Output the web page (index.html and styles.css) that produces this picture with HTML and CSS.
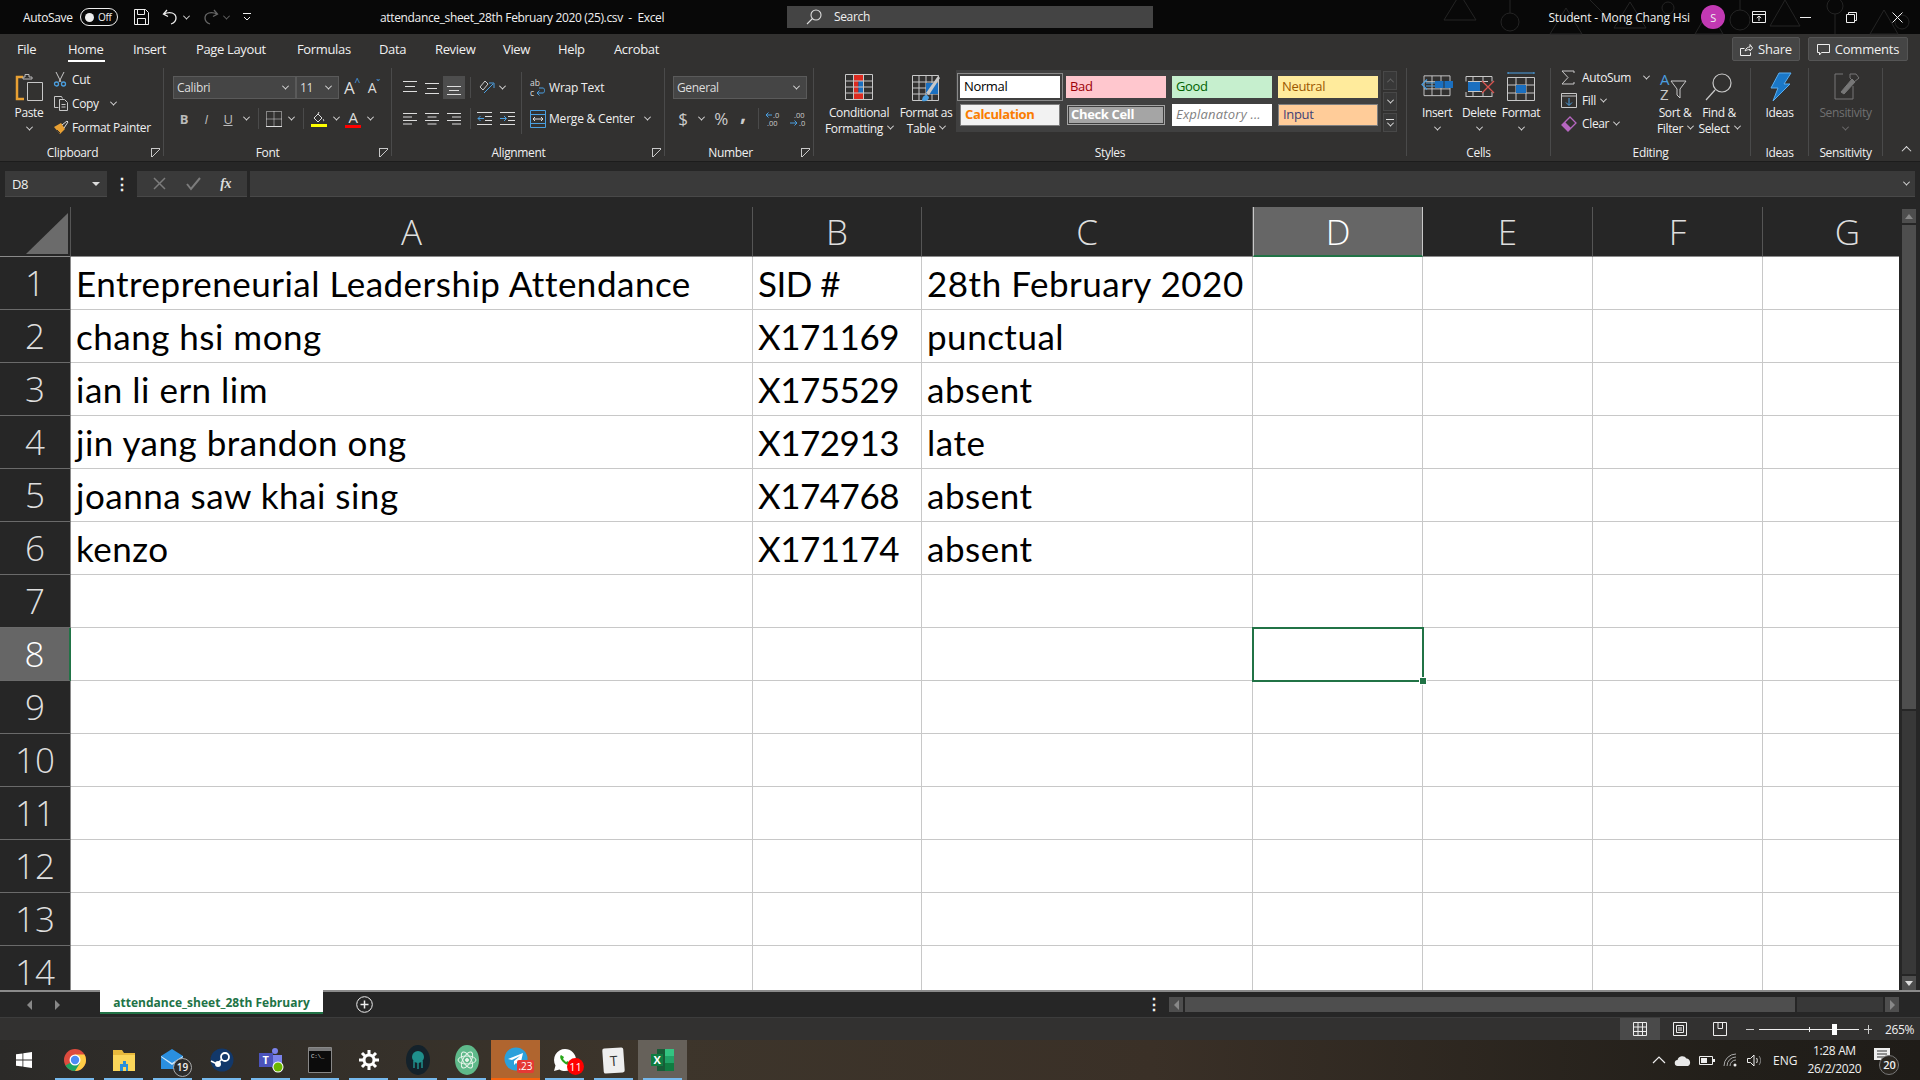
FILE: index.html
```html
<!DOCTYPE html>
<html lang="en">
<head>
  <meta charset="UTF-8" />
  <title>attendance_sheet_28th February 2020 (25).csv - Excel</title>
  <link rel="stylesheet" href="styles.css">
</head>
<body>

  <!-- title bar -->
  <div class="titlebar">
    <svg class="tb-pattern" width="480" height="34" fill="none" stroke="#242424">
      <path d="M20 -6l16 26h-32zM110 34l16-26 16 26zM190 2l16 26h-32zM255 34l14-24 14 24zM345 0l15 26h-30zM430 34l14-24 14 24z"/>
      <circle cx="70" cy="22" r="9"/><circle cx="228" cy="8" r="6"/><circle cx="300" cy="20" r="10"/><circle cx="395" cy="6" r="8"/><circle cx="462" cy="22" r="7"/>
      <path d="M70 0v13M150 0l20 20M300 0v10M395 14v20"/>
    </svg>
    <div class="tb-left">
      <span class="autosave">AutoSave</span>
      <span class="toggle"><i></i>Off</span>
      <svg class="qat" width="17" height="18" fill="none" stroke="#eee"><path d="M1.500 1.500h11l3 3v12h-14zM4.500 1.500v5h7v-5M4.500 16.500v-6h8v6"/></svg>
      <svg class="undo" width="18" height="16" fill="none" stroke="#eee" stroke-width="1.300"><path d="M5 1L1.500 5 6 7.500M2 5c6-3 12-1 12 4 0 3-2 5-5 6"/></svg>
      <i class="chev c-lite"></i>
      <svg class="redo" width="18" height="16" fill="none" stroke="#666" stroke-width="1.300"><path d="M13 1l3.500 4L12 7.500M16 5c-6-3-12-1-12 4 0 3 2 5 5 6"/></svg>
      <i class="chev c-dim"></i>
      <svg class="qat-more" width="8" height="10" fill="none" stroke="#eee"><path d="M0 1.500h8M1 5l3 3 3-3"/></svg>
    </div>
    <div class="tb-title">attendance_sheet_28th February 2020 (25).csv &nbsp;-&nbsp; Excel</div>
    <div class="search">
      <svg width="16" height="16" fill="none" stroke="#ddd" stroke-width="1.100"><circle cx="10" cy="6" r="5"/><path d="M6.500 9.500L1 15"/></svg>
      <span>Search</span>
    </div>
    <div class="tb-right">
      <span class="user">Student - Mong Chang Hsi</span>
      <span class="avatar">S</span>
      <span class="winbtn"><svg width="14" height="12" fill="none" stroke="#eee"><path d="M.5 .5h13v11H.5zM.5 3.500h13M7 10V5M4.800 7L7 5l2.200 2"/></svg></span>
      <span class="winbtn"><svg width="11" height="11" stroke="#eee"><path d="M0 5.500h11"/></svg></span>
      <span class="winbtn"><svg width="11" height="11" fill="none" stroke="#eee"><path d="M.5 2.500h8v8h-8zM2.500 2.500v-2h8v8h-2"/></svg></span>
      <span class="winbtn"><svg width="11" height="11" stroke="#eee"><path d="M.5 .5l10 10M10.500 .5l-10 10"/></svg></span>
    </div>
  </div>

  <!-- ribbon tabs -->
  <div class="tabs">
    <span class="tab">File</span>
    <span class="tab active">Home</span>
    <span class="tab">Insert</span>
    <span class="tab">Page Layout</span>
    <span class="tab">Formulas</span>
    <span class="tab">Data</span>
    <span class="tab">Review</span>
    <span class="tab">View</span>
    <span class="tab">Help</span>
    <span class="tab">Acrobat</span>
    <div class="tab-actions">
      <span class="pill pill-share"><svg width="13" height="13" fill="none" stroke="#eee"><path d="M4.500 5.500h-4v7h10v-3M5 8c1-3 3-4 5-4V1.500L12.500 5 10 8V6.500C8 6.500 6.500 7 5 8z"/></svg>Share</span>
      <span class="pill pill-comments"><svg width="13" height="13" fill="none" stroke="#eee"><path d="M.5 1.500h12v8h-8l-2 2.500v-2.500h-2z"/></svg>Comments</span>
    </div>
  </div>

  <!-- ribbon -->
  <div class="ribbon">
    <div class="group g-clip">
      <div class="body clip-body">
        <div class="big paste">
          <svg class="big-ic" width="30" height="30" fill="none"><path d="M9 5H3v22h7" stroke="#e8a033" stroke-width="2.500"/><path d="M9 5h2V2.500h4V5h3v2H9z" stroke="#bbb"/><path d="M13.500 10.500h15v18h-15z" stroke="#c8c8c8" fill="#333230"/></svg>
          <span>Paste</span><i class="chev"></i>
        </div>
        <div class="smalls">
          <div class="small"><svg width="14" height="16" fill="none"><path d="M3 1l5 10M11 1L6 11" stroke="#c8c8c8"/><circle cx="3.500" cy="13" r="2" stroke="#4a9fe0" stroke-width="1.300"/><circle cx="10.500" cy="13" r="2" stroke="#4a9fe0" stroke-width="1.300"/></svg><span>Cut</span></div>
          <div class="small"><svg width="16" height="16" fill="none" stroke="#c8c8c8"><path d="M5.500 12.500H1.500V1.500h7l1 2M6.500 4.500h5l3 3v8h-8zM8.500 9.500h4M8.500 12h4"/></svg><span>Copy</span><i class="chev cm"></i></div>
          <div class="small"><svg width="16" height="15" fill="none"><path d="M1 7l7-4 4 6-5 5z" fill="#e8a033"/><path d="M9 5l5-4 1 1-4 6" stroke="#ddd"/><path d="M4 10l3 3" stroke="#333"/></svg><span>Format Painter</span></div>
        </div>
      </div>
      <div class="glabel">Clipboard</div>
      <i class="launch"></i>
    </div>

    <div class="group g-font">
      <div class="body rows">
        <div class="row">
          <span class="select s-font">Calibri<i class="chev"></i></span>
          <span class="select s-size">11<i class="chev"></i></span>
          <span class="grow-a ga1">A<sup>^</sup></span>
          <span class="grow-a ga2">A<sup>ˇ</sup></span>
        </div>
        <div class="row">
          <span class="ic w22 glyph"><b>B</b></span>
          <span class="ic w22 glyph"><em>I</em></span>
          <span class="ic w22 glyph"><u>U</u></span>
          <span class="ic w14"><i class="chev"></i></span>
          <span class="sep"></span>
          <span class="ic w20"><svg width="16" height="16" fill="none" stroke="#ddd" stroke-dasharray="1 1"><path d="M.5 .5h15v15H.5zM8 .5v15M.5 8h15"/><path d="M0 15.500h16" stroke-dasharray="none"/></svg></span>
          <span class="ic w14"><i class="chev"></i></span>
          <span class="sep"></span>
          <span class="ic w20"><svg width="16" height="16" fill="none"><path d="M3 7l4-4 4 4-4 4zM8 1l-1 2M12 8c1 1 1 2 0 2" stroke="#ddd"/><path d="M0 13h16v3H0z" fill="#ff0"/></svg></span>
          <span class="ic w14"><i class="chev"></i></span>
          <span class="ic w20 fontcolor">A</span>
          <span class="ic w14"><i class="chev"></i></span>
        </div>
      </div>
      <div class="glabel">Font</div>
      <i class="launch"></i>
    </div>

    <div class="group g-align">
      <div class="body align-body">
        <div class="rows align-left">
          <div class="row">
            <span class="ic w22"><svg width="14" height="12" stroke="#ddd"><path d="M0 .5h14M2 5.500h10M0 10.500h14" transform="translate(0 -1)"/></svg></span>
            <span class="ic w22"><svg width="14" height="12" stroke="#ddd"><path d="M0 1.500h14M2 6.500h10M0 11.500h14"/></svg></span>
            <span class="ic w22 on"><svg width="14" height="14" stroke="#ddd"><path d="M0 5.500h14M2 9.500h10M0 13.500h14"/></svg></span>
            <span class="sep"></span>
            <span class="ic w20"><svg width="17" height="17" fill="none"><path d="M2 8l5-6 3 3-5 6z" stroke="#ccc"/><path d="M6 14L15 5M11 4h5v5" stroke="#4a9fe0"/></svg></span>
            <span class="ic w12"><i class="chev"></i></span>
          </div>
          <div class="row">
            <span class="ic w22"><svg width="14" height="12" stroke="#ddd"><path d="M0 .5h14M0 4h9M0 7.500h14M0 11h9"/></svg></span>
            <span class="ic w22"><svg width="14" height="12" stroke="#ddd"><path d="M0 .5h14M2.500 4h9M0 7.500h14M2.500 11h9"/></svg></span>
            <span class="ic w22"><svg width="14" height="12" stroke="#ddd"><path d="M0 .5h14M5 4h9M0 7.500h14M5 11h9"/></svg></span>
            <span class="sep"></span>
            <span class="ic w22 indent-a"><svg width="15" height="13" fill="none"><path d="M0 .5h15M8 4.500h7M8 8.500h7M0 12.500h15" stroke="#ddd"/><path d="M7 6.500H1M3.500 4l-2.500 2.500L3.500 9" stroke="#4a9fe0"/></svg></span>
            <span class="ic w22 indent-b"><svg width="15" height="13" fill="none"><path d="M0 .5h15M8 4.500h7M8 8.500h7M0 12.500h15" stroke="#ddd"/><path d="M0 6.500h6M4 4l2.500 2.500L4 9" stroke="#4a9fe0"/></svg></span>
          </div>
        </div>
        <div class="rows align-right">
          <div class="row"><svg class="wrap-ic" width="16" height="20" fill="none"><text x="0" y="8" class="wrap-text">ab</text><text x="0" y="18" class="wrap-text">c</text><path d="M7 15h6c2 0 2-5 0-5H9M9.500 12.500L7 15l2.500 2.500" stroke="#4a9fe0"/></svg><span class="t">Wrap Text</span></div>
          <div class="row"><svg class="wrap-ic" width="16" height="18" fill="none"><path d="M.5 .5h15v17H.5zM.5 4.500h15M.5 13.500h15" stroke="#4a9fe0"/><path d="M3 9h10M5 7L3 9l2 2M11 7l2 2-2 2" stroke="#ddd"/></svg><span class="t">Merge &amp; Center</span><i class="chev merge-chev"></i></div>
        </div>
      </div>
      <div class="glabel">Alignment</div>
      <i class="launch"></i>
    </div>

    <div class="group g-number">
      <div class="body rows">
        <div class="row"><span class="select s-gen">General<i class="chev"></i></span></div>
        <div class="row">
          <span class="ic w20 numglyph">$</span>
          <span class="ic w16"><i class="chev"></i></span>
          <span class="ic w20 ml2 numglyph">%</span>
          <span class="ic w20 ml2 numglyph comma">,</span>
          <span class="sep"></span>
          <span class="ic w20 decs"><svg width="18" height="16" fill="none"><text x="8" y="7" class="dec-text">.0</text><text x="2" y="15" class="dec-text">.00</text><path d="M7 4H1M3.500 1.500L1 4l2.500 2.500" stroke="#4a9fe0"/></svg></span>
          <span class="ic w20 decs ml4"><svg width="18" height="16" fill="none"><text x="5" y="7" class="dec-text">.00</text><text x="10" y="15" class="dec-text">.0</text><path d="M1 12h7M5.500 9.500L8 12l-2.500 2.500" stroke="#4a9fe0"/></svg></span>
        </div>
      </div>
      <div class="glabel">Number</div>
      <i class="launch"></i>
    </div>

    <div class="group g-styles">
      <div class="body styles-body">
        <div class="big cf">
          <svg class="big-ic" width="30" height="30" fill="none"><path d="M9.500 2h10v7h-10zM9.500 21h10v7h-10z" fill="#dc2a20"/><path d="M9.500 9h5v12h-5z" fill="#dc2a20"/><path d="M14.500 9h5v12h-5z" fill="#1a6fc0"/><path d="M1.500 2.500h27v25h-27zM1.500 9h27M1.500 15h27M1.500 21h27M9.500 2.500v25M19.500 2.500v25" stroke="#c8c8c8"/></svg>
          <span>Conditional</span><span>Formatting<i class="chev inl"></i></span>
        </div>
        <div class="big fat">
          <svg class="big-ic" width="30" height="30" fill="none"><path d="M1.500 3.500h26v25h-26zM1.500 10h26M1.500 16h26M1.500 22h26M8 3.500v25M15 3.500v25M21 3.500v25" stroke="#c8c8c8"/><path d="M15 11h12v11H15z" fill="#1a6fc0"/><path d="M27 4l2 2-11 17-3-2z" fill="#c8c8c8"/><path d="M11 29c0-4 2-6 5-6l2 2c0 3-3 5-7 4z" fill="#4a9fe0"/></svg>
          <span>Format as</span><span>Table<i class="chev inl"></i></span>
        </div>
        <div class="gallery">
          <span class="sty st-normal">Normal</span>
          <span class="sty st-bad">Bad</span>
          <span class="sty st-good">Good</span>
          <span class="sty st-neutral">Neutral</span>
          <span class="sty st-calc">Calculation</span>
          <span class="sty st-check">Check Cell</span>
          <span class="sty st-expl">Explanatory ...</span>
          <span class="sty st-input">Input</span>
        </div>
        <div class="spin">
          <span class="spin-btn dis"><i class="chev up"></i></span>
          <span class="spin-btn"><i class="chev"></i></span>
          <span class="spin-btn more"><i class="bar"></i><i class="chev"></i></span>
        </div>
      </div>
      <div class="glabel">Styles</div>
    </div>

    <div class="group g-cells">
      <div class="body cells-body">
        <div class="big c42">
          <svg class="big-ic" width="32" height="30" fill="none"><path d="M3 6.500h26v22H3zM3 13h26M3 21h26M11 6.500v22M20 6.500v22" stroke="#c8c8c8" transform="translate(0 -2) scale(1 .9)"/><path d="M14 9h18v7H14z" fill="#1a6fc0"/><path d="M23 9v7" stroke="#333230"/><path d="M14 11H5M14 14H5M6 7.500L1 12.500l5 5" stroke="#4a9fe0" stroke-width="1.200"/></svg>
          <span>Insert</span><i class="chev"></i>
        </div>
        <div class="big c42">
          <svg class="big-ic" width="32" height="30" fill="none"><path d="M3 4.500h26M3 24.500h26M3 4.500v5M29 4.500v5M3 20v5M29 20v5M10 4.500v5M10 20v5M20 4.500v5M20 20v5" stroke="#c8c8c8"/><path d="M5 10h12v9H5z" fill="#1a6fc0"/><path d="M5 9.500h20M5 19.500h14" stroke="#c8c8c8"/><path d="M19 9l12 12M31 9L19 21" stroke="#d9534f" stroke-width="1.300"/></svg>
          <span>Delete</span><i class="chev"></i>
        </div>
        <div class="big c42">
          <svg class="big-ic" width="30" height="30" fill="none"><path d="M2 1h26M2 0v2M28 0v2" stroke="#4a9fe0"/><path d="M1.500 5.500h27v23h-27zM1.500 13h27M1.500 21h27M10 5.500v23M20 5.500v23" stroke="#c8c8c8"/><path d="M10 13h10v8H10z" fill="#1a6fc0"/></svg>
          <span>Format</span><i class="chev"></i>
        </div>
      </div>
      <div class="glabel">Cells</div>
    </div>

    <div class="group g-edit">
      <div class="body edit-body">
        <div class="edit-small">
          <div class="small es"><svg width="14" height="15" fill="none" stroke="#c8c8c8"><path d="M13 3V1H1l6 6.500L1 14h12v-2"/></svg><span>AutoSum</span><i class="chev autosum-chev"></i></div>
          <div class="small es"><svg width="16" height="15" fill="none"><path d="M.5 .5h15v14H.5zM.5 3h15" stroke="#c8c8c8"/><path d="M8 5v7M5 9.500L8 12.500l3-3" stroke="#4a9fe0"/></svg><span>Fill</span><i class="chev ce"></i></div>
          <div class="small es"><svg width="16" height="16"><path d="M1 9l8-8 6 6-8 8z" fill="none" stroke="#b666c0" stroke-width="1.300"/><path d="M1 9l3-3 6 6-3 3z" fill="#b666c0"/></svg><span>Clear</span><i class="chev ce"></i></div>
        </div>
        <div class="big c44">
          <svg class="big-ic" width="30" height="30" fill="none"><text x="0" y="13" class="az a">A</text><text x="0" y="28" class="az">Z</text><path d="M11 9h15l-6 8v9l-3-3v-6z" stroke="#c8c8c8"/></svg>
          <span>Sort &amp;</span><span>Filter<i class="chev inl"></i></span>
        </div>
        <div class="big c44">
          <svg class="big-ic" width="30" height="30" fill="none" stroke="#c8c8c8" stroke-width="1.200"><circle cx="18" cy="11" r="9"/><path d="M11 18L2 28"/></svg>
          <span>Find &amp;</span><span>Select<i class="chev inl"></i></span>
        </div>
      </div>
      <div class="glabel">Editing</div>
    </div>

    <div class="group g-ideas">
      <div class="body">
        <div class="big">
          <svg class="big-ic" width="24" height="30"><path d="M11 1h12l-7 11h6L5 29l5-13H3z" fill="#1a78c8" stroke="#5aaef0"/></svg>
          <span>Ideas</span>
        </div>
      </div>
      <div class="glabel">Ideas</div>
    </div>

    <div class="group g-sens">
      <div class="body">
        <div class="big disabled">
          <svg class="big-ic" width="28" height="30" fill="none" stroke="#777"><path d="M11 2H3v25h18V14"/><path d="M9 20l11-13 3 3-11 12z" fill="#777"/><path d="M18 2h6l3 4-5 4-4-4z"/></svg>
          <span>Sensitivity</span><i class="chev"></i>
        </div>
      </div>
      <div class="glabel">Sensitivity</div>
    </div>
    <i class="chev up collapse"></i>
  </div>

  <!-- formula bar -->
  <div class="fbar">
    <span class="namebox">D8<i class="tri"></i></span>
    <span class="fdots">⋮</span>
    <span class="fbtns">
      <svg width="13" height="13" stroke="#7c7c7c" stroke-width="1.500"><path d="M1 1l11 11M12 1L1 12"/></svg>
      <svg width="15" height="13" fill="none" stroke="#7c7c7c" stroke-width="2"><path d="M1 7l4 5 9-11"/></svg>
      <em>fx</em>
    </span>
    <span class="finput"><i class="chev"></i></span>
  </div>

  <!-- worksheet -->
  <div class="sheet-wrap">
    <div class="sheet">
      <div class="hd corner"><svg width="42" height="41"><path d="M42 0v41H0z" fill="#6b6b6b"/></svg></div>
      <div class="hd">A</div><div class="hd">B</div><div class="hd">C</div><div class="hd hd-sel">D</div><div class="hd">E</div><div class="hd">F</div><div class="hd">G</div>

      <div class="rh">1</div><div class="c">Entrepreneurial Leadership Attendance</div><div class="c n">SID #</div><div class="c">28th February 2020</div><div class="c"></div><div class="c"></div><div class="c"></div><div class="c"></div>
      <div class="rh">2</div><div class="c">chang hsi mong</div><div class="c n">X171169</div><div class="c">punctual</div><div class="c"></div><div class="c"></div><div class="c"></div><div class="c"></div>
      <div class="rh">3</div><div class="c">ian li ern lim</div><div class="c n">X175529</div><div class="c">absent</div><div class="c"></div><div class="c"></div><div class="c"></div><div class="c"></div>
      <div class="rh">4</div><div class="c">jin yang brandon ong</div><div class="c n">X172913</div><div class="c">late</div><div class="c"></div><div class="c"></div><div class="c"></div><div class="c"></div>
      <div class="rh">5</div><div class="c">joanna saw khai sing</div><div class="c n">X174768</div><div class="c">absent</div><div class="c"></div><div class="c"></div><div class="c"></div><div class="c"></div>
      <div class="rh">6</div><div class="c">kenzo</div><div class="c n">X171174</div><div class="c">absent</div><div class="c"></div><div class="c"></div><div class="c"></div><div class="c"></div>
      <div class="rh">7</div><div class="c"></div><div class="c"></div><div class="c"></div><div class="c"></div><div class="c"></div><div class="c"></div><div class="c"></div>
      <div class="rh rh-sel">8</div><div class="c"></div><div class="c"></div><div class="c"></div><div class="c selected"><i class="handle"></i></div><div class="c"></div><div class="c"></div><div class="c"></div>
      <div class="rh">9</div><div class="c"></div><div class="c"></div><div class="c"></div><div class="c"></div><div class="c"></div><div class="c"></div><div class="c"></div>
      <div class="rh">10</div><div class="c"></div><div class="c"></div><div class="c"></div><div class="c"></div><div class="c"></div><div class="c"></div><div class="c"></div>
      <div class="rh">11</div><div class="c"></div><div class="c"></div><div class="c"></div><div class="c"></div><div class="c"></div><div class="c"></div><div class="c"></div>
      <div class="rh">12</div><div class="c"></div><div class="c"></div><div class="c"></div><div class="c"></div><div class="c"></div><div class="c"></div><div class="c"></div>
      <div class="rh">13</div><div class="c"></div><div class="c"></div><div class="c"></div><div class="c"></div><div class="c"></div><div class="c"></div><div class="c"></div>
      <div class="rh">14</div><div class="c"></div><div class="c"></div><div class="c"></div><div class="c"></div><div class="c"></div><div class="c"></div><div class="c"></div>
    </div>
    <div class="vscroll">
      <span class="sb-btn"><i class="tri up"></i></span>
      <span class="v-thumb"></span>
      <span class="v-track"></span>
      <span class="sb-btn"><i class="tri"></i></span>
    </div>
  </div>

  <!-- sheet tabs + horizontal scrollbar -->
  <div class="sheetbar">
    <span class="nav"><i class="tri left"></i><i class="tri right"></i></span>
    <span class="sheet-tab">attendance_sheet_28th February</span>
    <svg class="add" width="17" height="17" fill="none" stroke="#eee"><circle cx="8.500" cy="8.500" r="7.800"/><path d="M8.500 4.500v8M4.500 8.500h8" stroke-width="1.500"/></svg>
    <span class="sdots">⋮</span>
    <div class="hscroll">
      <span class="sb-btn"><i class="tri left"></i></span>
      <span class="h-thumb"></span>
      <span class="h-track"></span>
      <span class="sb-btn"><i class="tri right"></i></span>
    </div>
  </div>

  <!-- status bar -->
  <div class="statusbar">
    <span class="view on"><svg width="14" height="14" fill="none" stroke="#eee"><path d="M.5 .5h13v13H.5zM.5 5h13M.5 9.500h13M5 .5v13M9.500 .5v13"/></svg></span>
    <span class="view"><svg width="14" height="14" fill="none" stroke="#eee"><path d="M.5 .5h13v13H.5zM3.500 3.500h7v7h-7zM5 6h4M5 8h4"/></svg></span>
    <span class="view"><svg width="14" height="14" fill="none" stroke="#eee"><path d="M.5 .5h13v13H.5zM5 .5v6h4.500v-6"/></svg></span>
    <span class="zoom-minus"></span>
    <span class="slider"><i class="tick"></i><i class="thumb"></i></span>
    <span class="zoom-plus"></span>
    <span class="pct">265%</span>
  </div>

  <!-- taskbar -->
  <div class="taskbar">
    <span class="task start"><svg width="16" height="16" fill="#fff"><path d="M0 2.300L6.500 1.400v6.200H0zM7.300 1.300L16 0v7.600H7.300zM0 8.400h6.500v6.200L0 13.700zM7.300 8.400H16V16l-8.700-1.300z"/></svg></span>
    <span class="task run"><svg width="24" height="24"><circle cx="12" cy="12" r="11" fill="#dd4b3e"/><path d="M12 12V23A11 11 0 0 0 23 12 11 11 0 0 0 21.500 6.500H12z" fill="#ffcd46"/><path d="M12 12L2.500 17.500A11 11 0 0 0 12 23l5-8z" fill="#1da462"/><circle cx="12" cy="12" r="5.500" fill="#fff"/><circle cx="12" cy="12" r="4.200" fill="#4c8bf5"/></svg></span>
    <span class="task run2"><svg width="24" height="22"><path d="M1 1h9l2 3h11v18H1z" fill="#e8b93c"/><path d="M1 6h22v16H1z" fill="#fbd65a"/><path d="M8 22v-7h3v-3h3v3h2v7h-2v-4h-3v4z" fill="#2a8fd8"/></svg></span>
    <span class="task run2"><svg width="24" height="22"><path d="M0 7l11-7 11 7v13H0z" fill="#2a8fe0"/><path d="M0 7l11 7 11-7v1L11 16 0 8z" fill="#cfe8fb"/></svg><b class="count">19</b></span>
    <span class="task run"><svg width="24" height="24"><circle cx="12" cy="12" r="11.500" fill="#12386a"/><circle cx="15" cy="9" r="4" fill="none" stroke="#fff" stroke-width="1.800"/><circle cx="8" cy="16" r="3" fill="#fff"/><path d="M1 13l6 3 5-5" stroke="#fff" stroke-width="1.500" fill="none"/></svg></span>
    <span class="task run"><svg width="26" height="26"><circle cx="17" cy="4" r="3" fill="#7b83eb"/><path d="M13 8h11v9a5 5 0 0 1-11 0z" fill="#7b83eb"/><path d="M1 6h14v14H1z" fill="#4b53bc"/><text x="4.500" y="17" class="teams-t">T</text><circle cx="20" cy="20" r="5.500" fill="#fff"/><circle cx="20" cy="20" r="4.500" fill="#6bb700"/></svg></span>
    <span class="task run2"><svg width="24" height="26"><path d="M.5 .5h23v25H.5z" fill="#0c0c0c" stroke="#888"/><path d="M1 1h22v3H1z" fill="#777"/><text x="3" y="11" class="cmd-t">C:\_</text></svg></span>
    <span class="task run"><svg width="20" height="20" fill="none" stroke="#fff"><circle cx="10" cy="10" r="5" stroke-width="3"/><path d="M10 0v4M10 16v4M0 10h4M16 10h4M3 3l3 3M14 14l3 3M17 3l-3 3M6 14l-3 3" stroke-width="3"/></svg></span>
    <span class="task run"><svg width="24" height="30"><ellipse cx="12" cy="15" rx="12" ry="15" fill="#14222b"/><circle cx="12" cy="12" r="6" fill="#1f8f8c"/><path d="M8 16v7M12 17v7M16 16v7" stroke="#1f8f8c" stroke-width="1.500"/></svg></span>
    <span class="task run"><svg width="24" height="30" fill="none" stroke="#e8f5ea"><ellipse cx="12" cy="15" rx="12" ry="15" fill="#5fb98a" stroke="none"/><ellipse cx="12" cy="15" rx="9" ry="4"/><ellipse cx="12" cy="15" rx="9" ry="4" transform="rotate(60 12 15)"/><ellipse cx="12" cy="15" rx="9" ry="4" transform="rotate(120 12 15)"/><circle cx="12" cy="15" r="1.500" fill="#e8f5ea"/></svg></span>
    <span class="task flash"><svg width="24" height="24"><circle cx="12" cy="12" r="11.500" fill="#2ba0db"/><path d="M4 12l15-6-3 13-4-3-2 2v-4l6-5-8 4z" fill="#fff"/></svg><b class="badge red-sq">.23</b></span>
    <span class="task run"><svg width="24" height="24"><path d="M12 1a11 11 0 0 1 0 22c-2 0-4-.5-5.500-1.500L1 23l1.500-5.500A11 11 0 0 1 12 1z" fill="#fff"/><path d="M8 7c-2 2 0 5 2 7s5 4 7 2l-2-3-2 1-3-3 1-2z" fill="#29a71a"/></svg><b class="badge red-c">11</b></span>
    <span class="task run"><span class="tlogo">T</span></span>
    <span class="task run current"><svg width="24" height="24"><path d="M6 1h17v22H6z" fill="#185c37"/><path d="M14 1h9v7h-9z" fill="#33c481"/><path d="M14 8h9v7h-9z" fill="#21a366"/><path d="M14 15h9v8h-9z" fill="#107c41"/><path d="M0 6h12v12H0z" fill="#107c41"/><text x="2.500" y="16" class="xl-t">X</text></svg></span>
    <div class="tray">
      <svg width="14" height="8" fill="none" stroke="#eee" stroke-width="1.200"><path d="M1 7l6-6 6 6"/></svg>
      <svg width="17" height="11" fill="#e8e8e8"><path d="M4 11a3 3 0 0 1-.5-6 5 5 0 0 1 9-1.500A4 4 0 0 1 14 11z"/></svg>
      <svg width="16" height="9" fill="none" stroke="#eee"><path d="M.5 .5h13v8H.5z"/><path d="M2 2h6v5H2z" fill="#eee" stroke="none"/><path d="M15 3v3" stroke-width="2"/></svg>
      <svg width="16" height="14" fill="none" stroke="#aaa"><path d="M1 13a12 12 0 0 1 12-12M4 13a9 9 0 0 1 9-9M7 13a6 6 0 0 1 6-6"/><circle cx="12" cy="12" r="1.500" fill="#eee" stroke="none"/></svg>
      <svg width="16" height="13" fill="none" stroke="#eee"><path d="M.5 4.500h3l3.500-3.500v11l-3.500-3.500h-3zM9.500 4c1 1 1 4 0 5"/><path d="M12 2c2 2 2 7 0 9" stroke="#888"/></svg>
      <span class="lang">ENG</span>
      <span class="clock"><span>1:28 AM</span><span>26/2/2020</span></span>
      <span class="notif"><svg width="16" height="13" fill="#eee"><path d="M0 0h16v12H0z"/><path d="M3 3h10M3 6h10M3 9h7" stroke="#333" fill="none"/></svg><b>20</b></span>
    </div>
  </div>

</body>
</html>
```

FILE: styles.css
```css
* {
  box-sizing: border-box;
}
body {
  margin: 0;
  width: 1920px;
  height: 1080px;
  overflow: hidden;
  display: flex;
  flex-direction: column;
  font-family: "Open Sans", "Noto Sans", sans-serif;
  font-size: 12px;
  letter-spacing: -0.35px;
  color: #f0f0f0;
  background: #323130;
}
svg {
  flex: none;
  display: block;
  overflow: visible;
}
i {
  font-style: normal;
}

/* small chevrons */
.chev {
  display: inline-block;
  width: 5px;
  height: 5px;
  border-right: 1px solid #e0e0e0;
  border-bottom: 1px solid #e0e0e0;
  transform: rotate(45deg) translate(-1px, -1px);
  flex: none;
}
.chev.up {
  transform: rotate(225deg) translate(-1px, -1px);
}
.chev.inl {
  margin-left: 5px;
  vertical-align: 3px;
}
.chev.cm {
  margin-left: 9px;
}
.chev.ce {
  margin-left: 0;
}
.c-lite {
  margin-left: -8px;
}
.c-dim {
  margin-left: -7px;
  border-color: #666;
}
.tri {
  display: inline-block;
  width: 0;
  height: 0;
  border-left: 4px solid transparent;
  border-right: 4px solid transparent;
  border-top: 5px solid #ddd;
}
.tri.up {
  border-top: 0;
  border-bottom: 5px solid #888;
}
.tri.left {
  border: 0;
  border-top: 5px solid transparent;
  border-bottom: 5px solid transparent;
  border-right: 5px solid #888;
}
.tri.right {
  border: 0;
  border-top: 5px solid transparent;
  border-bottom: 5px solid transparent;
  border-left: 5px solid #888;
}

/* title bar */
.titlebar {
  height: 34px;
  flex: none;
  display: flex;
  align-items: center;
  background: #080808;
  position: relative;
}
.tb-pattern {
  position: absolute;
  top: 0;
  left: 1440px;
}
.tb-left {
  width: 380px;
  padding-left: 23px;
  display: flex;
  align-items: center;
  gap: 12px;
  flex: none;
}
.autosave {
  width: 51px;
}
.toggle {
  width: 38px;
  height: 18px;
  border: 1px solid #eee;
  border-radius: 9px;
  display: flex;
  align-items: center;
  gap: 4px;
  padding-left: 4px;
  font-size: 10px;
  margin-left: -6px;
}
.toggle i {
  width: 9px;
  height: 9px;
  background: #eee;
  border-radius: 50%;
}
.qat {
  margin-left: 3px;
}
.qat-more {
  margin-left: 2px;
}
.tb-title {
  width: 407px;
  flex: none;
  white-space: nowrap;
}
.search {
  width: 366px;
  height: 22px;
  background: #444;
  display: flex;
  align-items: center;
  gap: 12px;
  padding-left: 19px;
  flex: none;
  line-height: 20px;
}
.tb-right {
  flex: 1;
  display: flex;
  align-items: center;
  justify-content: flex-end;
  position: relative;
}
.user {
  margin-right: 11px;
  letter-spacing: -0.15px;
}
.avatar {
  width: 24px;
  height: 24px;
  border-radius: 50%;
  background: #c239b3;
  display: flex;
  align-items: center;
  justify-content: center;
  margin-right: 11px;
  font-size: 11px;
}
.winbtn {
  width: 46px;
  height: 34px;
  display: flex;
  align-items: center;
  justify-content: center;
}

/* ribbon tabs */
.tabs {
  height: 32px;
  flex: none;
  display: grid;
  grid-template-columns: 51px 65px 63px 101px 82px 56px 68px 55px 56px 1fr 188px;
  align-items: start;
  padding-left: 17px;
  background: #323130;
  font-size: 13px;
}
.tab {
  height: 28px;
  line-height: 30px;
  position: relative;
  white-space: nowrap;
}
.tab.active::after {
  content: "";
  position: absolute;
  left: 0;
  width: 37px;
  bottom: 0;
  height: 2px;
  background: #fff;
}
.tab-actions {
  grid-column: 11;
  display: flex;
  gap: 8px;
  padding-top: 3px;
}
.pill {
  height: 24px;
  border: 1px solid #555;
  border-radius: 2px;
  background: #454545;
  display: flex;
  align-items: center;
  justify-content: center;
  gap: 5px;
  font-size: 13px;
  letter-spacing: -0.2px;
}
.pill-share {
  width: 68px;
}
.pill-comments {
  width: 100px;
}

/* ribbon */
.ribbon {
  height: 95px;
  flex: none;
  display: flex;
  padding-top: 2px;
  background: #323130;
  position: relative;
  box-shadow: 0 1px 0 #1c1c1c;
}
.group {
  height: 88px;
  flex: none;
  border-right: 1px solid #4a4a4a;
  position: relative;
}
.g-clip { width: 164px; }
.g-font { width: 228px; }
.g-align { width: 273px; }
.g-number { width: 149px; }
.g-styles { width: 593px; }
.g-cells { width: 144px; }
.g-edit { width: 200px; }
.g-ideas { width: 58px; }
.g-sens { width: 74px; }
.body {
  height: 76px;
}
.g-font .body { padding-left: 9px; }
.g-align .body { padding-left: 7px; }
.g-number .body { padding-left: 8px; }
.g-styles .body { padding-left: 11px; }
.g-cells .body { padding-left: 9px; }
.g-edit .body { padding-left: 10px; }
.glabel {
  height: 12px;
  line-height: 17px;
  text-align: center;
  white-space: nowrap;
}
.g-clip .glabel { padding-right: 18px; }
.g-font .glabel { padding-right: 20px; }
.g-align .glabel { padding-right: 19px; }
.g-number .glabel { padding-right: 17px; }
.launch {
  position: absolute;
  right: 3px;
  bottom: -1px;
  width: 9px;
  height: 9px;
  border-left: 1px solid #c8c8c8;
  border-top: 1px solid #c8c8c8;
  background: linear-gradient(135deg, transparent 45%, #c8c8c8 45%, #c8c8c8 55%, transparent 55%);
}
.collapse {
  position: absolute;
  right: 10px;
  bottom: 8px;
  width: 7px;
  height: 7px;
}
.big {
  display: flex;
  flex-direction: column;
  align-items: center;
  padding-top: 4px;
  line-height: 16px;
  white-space: nowrap;
}
.big-ic {
  height: 30px;
  margin-bottom: 3px;
}
.big > .chev {
  margin-top: 5px;
}
.disabled {
  color: #707070;
}
.disabled .chev {
  border-color: #707070;
}

.clip-body {
  display: flex;
  padding-left: 10px;
}
.paste {
  width: 38px;
}
.smalls {
  margin: -1px 0 0 5px;
}
.small {
  height: 24px;
  display: flex;
  align-items: center;
  gap: 3px;
  white-space: nowrap;
}
.small svg {
  width: 16px;
}
.rows {
  padding-top: 8px;
}
.row {
  height: 23px;
  display: flex;
  align-items: center;
  margin-bottom: 8px;
}
.select {
  height: 23px;
  border: 1px solid #5a5a5a;
  background: #454545;
  display: flex;
  align-items: center;
  justify-content: space-between;
  padding: 0 7px 0 3px;
  color: #ddd;
}
.s-font { width: 123px; }
.s-size { width: 43px; }
.s-gen { width: 134px; }
.grow-a {
  font-size: 17px;
  color: #ddd;
  display: inline-flex;
  align-items: flex-start;
}
.grow-a sup {
  font-size: 10px;
  line-height: 12px;
  color: #4a9fe0;
}
.ga1 { margin-left: 5px; }
.ga2 { margin-left: 8px; font-size: 14px; }
.ic {
  height: 23px;
  display: inline-flex;
  align-items: center;
  justify-content: center;
  flex: none;
}
.w12 { width: 12px; }
.w14 { width: 14px; }
.w16 { width: 16px; }
.w20 { width: 20px; }
.w22 { width: 22px; }
.ml2 { margin-left: 2px; }
.ml4 { margin-left: 4px; }
.on {
  background: #4d4d4d;
}
.glyph {
  font-size: 13px;
  color: #bbb;
}
.sep {
  width: 1px;
  height: 21px;
  background: #4a4a4a;
  margin: 0 5px;
  flex: none;
}
.fontcolor {
  font-size: 15px;
  border-bottom: 3px solid #f00;
  height: 18px;
  line-height: 14px;
  color: #ddd;
  width: 16px;
  margin: 0 2px;
  align-items: flex-start;
}
.align-body {
  display: flex;
}
.align-left {
  width: 123px;
  border-right: 1px solid #4a4a4a;
  height: 62px;
  margin-top: 4px;
  padding-top: 4px;
}
.indent-a {
  margin-left: -3px;
}
.indent-b {
  margin-left: 1px;
}
.align-right {
  padding-left: 8px;
}
.wrap-ic {
  margin-right: 3px;
}
.wrap-text {
  font-size: 8.500px;
  fill: #ddd;
  letter-spacing: 0;
}
.t {
  letter-spacing: -0.2px;
}
.merge-chev {
  margin-left: 11px;
}
.numglyph {
  font-size: 17px;
  color: #ccc;
}
.comma {
  font-weight: 700;
  font-size: 22px;
  padding-bottom: 14px;
}
.dec-text {
  font-size: 7.500px;
  fill: #ccc;
  letter-spacing: 0;
}

.styles-body {
  display: flex;
}
.cf {
  width: 68px;
}
.fat {
  width: 52px;
  margin-left: 7px;
}
.gallery {
  width: 425px;
  height: 62px;
  margin: 2px 0 0 4px;
  padding: 6px 0 0 4px;
  background: #404040;
  display: grid;
  grid-template-columns: repeat(4, 100px);
  grid-auto-rows: 22px;
  gap: 6px;
  flex: none;
}
.sty {
  line-height: 20px;
  padding-left: 4px;
  font-size: 13px;
  white-space: nowrap;
  overflow: hidden;
}
.st-normal {
  background: #fff;
  color: #000;
  outline: 1px solid #8a8a8a;
  outline-offset: 2px;
}
.st-bad { background: #ffc7ce; color: #9c0006; }
.st-good { background: #c6efce; color: #006100; }
.st-neutral { background: #ffeb9c; color: #9c5700; }
.st-calc { background: #f2f2f2; color: #fa7d00; font-weight: 700; border: 1px solid #7f7f7f; line-height: 18px; }
.st-check { background: #a5a5a5; color: #fff; font-weight: 700; border: 3px double #3f3f3f; line-height: 14px; padding-left: 2px; }
.st-expl { background: #fff; color: #7f7f7f; font-style: italic; letter-spacing: 0.2px; }
.st-input { background: #fc9; color: #3f3f76; border: 1px solid #7f7f7f; line-height: 18px; }
.spin {
  margin: 3px 0 0 2px;
  width: 14px;
}
.spin-btn {
  height: 19px;
  margin-bottom: 2px;
  display: flex;
  flex-direction: column;
  align-items: center;
  justify-content: center;
  background: #383838;
  border: 1px solid #484848;
}
.spin-btn.dis .chev {
  border-color: #666;
}
.spin-btn.more {
  gap: 2px;
}
.spin-btn .bar {
  width: 8px;
  height: 1px;
  background: #e0e0e0;
}

.cells-body {
  display: flex;
}
.c42 {
  width: 42px;
}
.edit-body {
  display: flex;
}
.edit-small {
  width: 92px;
  margin-top: -2px;
}
.es {
  height: 23px;
  gap: 5px;
}
.es svg {
  width: 16px;
}
.autosum-chev {
  margin-left: 8px;
}
.c44 {
  width: 44px;
}
.az {
  font-size: 15px;
  fill: #c8c8c8;
  letter-spacing: 0;
}
.az.a {
  fill: #4a9fe0;
}
.g-ideas .big,
.g-sens .big {
  width: 100%;
}

/* formula bar */
.fbar {
  height: 46px;
  flex: none;
  display: flex;
  align-items: flex-start;
  background: #262626;
  padding: 10px 5px 0;
}
.namebox,
.fbtns,
.finput {
  height: 26px;
  background: #3a3a3a;
  border-bottom: 1px solid #484848;
  display: flex;
  align-items: center;
}
.namebox {
  width: 102px;
  justify-content: space-between;
  padding: 0 7px;
  font-size: 13px;
}
.namebox .tri {
  border-left-width: 4px;
  border-right-width: 4px;
  border-top-width: 4px;
}
.fdots {
  width: 30px;
  text-align: center;
  font-size: 16px;
  line-height: 26px;
  font-weight: 700;
}
.fbtns {
  width: 110px;
  justify-content: space-around;
  padding: 0 6px;
}
.fbtns em {
  font-family: "Liberation Serif", serif;
  font-weight: 700;
  font-size: 14px;
  color: #ddd;
}
.finput {
  margin-left: 3px;
  flex: 1;
  justify-content: flex-end;
  padding-right: 6px;
}

/* worksheet */
.sheet-wrap {
  height: 783px;
  flex: none;
  display: flex;
  background: #262626;
}
.sheet {
  width: 1899px;
  height: 783px;
  overflow: hidden;
  display: grid;
  grid-template-columns: 71px 682px 169px 331px 170px 170px 170px 170px;
  grid-auto-rows: 53px;
  grid-template-rows: 50px;
  flex: none;
}
.hd,
.rh {
  background: #262626;
  color: #dedede;
  font-size: 35px;
  letter-spacing: 0;
  text-align: center;
  font-weight: 300;
  line-height: 49px;
}
.hd {
  border-right: 1px solid #555;
  border-bottom: 1px solid #8a8a8a;
}
.rh {
  border-bottom: 1px solid #6a6a6a;
  border-right: 1px solid #8a8a8a;
  line-height: 52px;
}
.corner {
  display: flex;
  align-items: flex-end;
  justify-content: flex-end;
  padding: 0 2px 2px 0;
}
.hd-sel {
  background: #666;
  color: #fff;
  border-left: 1px solid #c8c8c8;
  border-right: 1px solid #c8c8c8;
  border-bottom: 2px solid #217346;
}
.rh-sel {
  background: #666;
  color: #fff;
  border-right: 2px solid #217346;
}
.c {
  background: #fff;
  color: #000;
  border-right: 1px solid #c8c8c8;
  border-bottom: 1px solid #c8c8c8;
  font-family: Lato, "Open Sans", sans-serif;
  font-size: 35px;
  letter-spacing: 0.5px;
  line-height: 53px;
  padding-left: 5px;
  white-space: nowrap;
  overflow: hidden;
}
.c.n {
  letter-spacing: -0.5px;
}
.selected {
  overflow: visible;
  border: 0;
  outline: 2px solid #217346;
  outline-offset: -1px;
  position: relative;
  z-index: 1;
}
.handle {
  position: absolute;
  right: -3px;
  bottom: -3px;
  width: 6px;
  height: 6px;
  background: #217346;
  outline: 1px solid #fff;
}
.vscroll {
  width: 21px;
  padding: 2px 4px 0 3px;
  display: flex;
  flex-direction: column;
  gap: 2px;
}
.vscroll .sb-btn {
  height: 14px;
}
.sb-btn {
  flex: none;
  background: #4e4e4e;
  display: flex;
  align-items: center;
  justify-content: center;
}
.v-thumb {
  height: 484px;
  background: #4e4e4e;
}
.v-track {
  flex: 1;
  background: #383838;
}

/* sheet tab bar */
.sheetbar {
  height: 28px;
  flex: none;
  display: flex;
  align-items: flex-start;
  background: #262626;
  border-top: 2px solid #8a8a8a;
  border-bottom: 1px solid #3c3c3c;
  position: relative;
}
.nav {
  width: 100px;
  padding: 8px 0 0 27px;
  display: flex;
  gap: 23px;
}
.sheet-tab {
  width: 223px;
  height: 24px;
  margin-top: -2px;
  background: #fff;
  color: #217346;
  font-weight: 700;
  letter-spacing: 0.03px;
  text-align: center;
  line-height: 25px;
  border-bottom: 2px solid #217346;
  white-space: nowrap;
}
.add {
  margin: 4px 0 0 33px;
}
.sdots {
  position: absolute;
  left: 1146px;
  top: 3px;
  width: 14px;
  text-align: center;
  font-size: 16px;
  font-weight: 700;
  line-height: 18px;
}
.hscroll {
  position: absolute;
  left: 1169px;
  top: 5px;
  width: 730px;
  height: 15px;
  display: flex;
  gap: 2px;
}
.hscroll .sb-btn {
  width: 14px;
}
.h-thumb {
  width: 610px;
  background: #4e4e4e;
}
.h-track {
  flex: 1;
  background: #383838;
}

/* status bar */
.statusbar {
  height: 22px;
  flex: none;
  display: flex;
  align-items: center;
  padding-left: 1620px;
  background: #323130;
}
.view {
  width: 40px;
  height: 22px;
  display: flex;
  align-items: center;
  justify-content: center;
}
.view.on {
  background: #4a4a4a;
}
.zoom-minus,
.zoom-plus {
  width: 8px;
  height: 1px;
  background: #ccc;
  position: relative;
  flex: none;
}
.zoom-minus {
  margin: 0 5px 0 6px;
}
.zoom-plus {
  margin-left: 5px;
}
.zoom-plus::after {
  content: "";
  position: absolute;
  left: 3.500px;
  top: -4px;
  width: 1px;
  height: 9px;
  background: #ccc;
}
.slider {
  width: 100px;
  height: 1px;
  background: #eee;
  position: relative;
  flex: none;
}
.tick {
  position: absolute;
  left: 50px;
  top: -2px;
  width: 1px;
  height: 5px;
  background: #eee;
}
.thumb {
  position: absolute;
  left: 73px;
  top: -5px;
  width: 5px;
  height: 11px;
  background: #fff;
}
.pct {
  margin-left: 13px;
  font-size: 12px;
  white-space: nowrap;
}

/* taskbar */
.taskbar {
  height: 40px;
  flex: none;
  display: flex;
  background: linear-gradient(90deg, #2b2a28, #3d352b 35%, #3a3027 60%, #221f1a 90%, #1f1c18);
  position: relative;
}
.task {
  width: 49px;
  height: 40px;
  display: flex;
  align-items: center;
  justify-content: center;
  position: relative;
  flex: none;
}
.start {
  width: 50px;
  padding-right: 3px;
}
.task.run::after,
.task.run2::after {
  content: "";
  position: absolute;
  left: 5px;
  right: 5px;
  bottom: 0;
  height: 2px;
  background: #76b9ed;
}
.flash {
  background: #b0652f;
  border-bottom: 2px solid #f7630c;
}
.current {
  background: #66615a;
}
.count {
  position: absolute;
  right: 5px;
  bottom: 3px;
  width: 19px;
  height: 19px;
  border-radius: 50%;
  background: #2c2c2c;
  border: 1px solid #aaa;
  font-size: 10px;
  font-weight: 600;
  text-align: center;
  line-height: 17px;
  letter-spacing: 0;
}
.badge {
  position: absolute;
  color: #fff;
  font-weight: 400;
  font-size: 10px;
  text-align: center;
  letter-spacing: 0;
}
.red-sq {
  right: 6px;
  bottom: 5px;
  width: 17px;
  height: 13px;
  background: #e53935;
  line-height: 13px;
  border-radius: 2px;
}
.red-c {
  right: 5px;
  bottom: 5px;
  width: 17px;
  height: 17px;
  border-radius: 50%;
  background: #f00;
  line-height: 17px;
  font-size: 11px;
}
.tlogo {
  width: 21px;
  height: 25px;
  background: #eee;
  color: #333;
  text-align: center;
  line-height: 25px;
  font-size: 14px;
  border-radius: 2px;
  transform: rotate(-4deg);
}
.teams-t {
  font-size: 11px;
  font-weight: 700;
  fill: #fff;
}
.cmd-t {
  font-size: 6px;
  fill: #ccc;
  font-family: "Liberation Mono", monospace;
}
.xl-t {
  font-size: 11px;
  font-weight: 700;
  fill: #fff;
  letter-spacing: 0;
}
.tray {
  position: absolute;
  left: 1652px;
  top: 0;
  height: 40px;
  display: flex;
  align-items: center;
  gap: 8px;
}
.lang {
  font-size: 12px;
  margin-left: 2px;
  letter-spacing: 0;
}
.clock {
  width: 72px;
  display: flex;
  flex-direction: column;
  align-items: center;
  line-height: 18px;
  margin-left: -7px;
}
.notif {
  position: relative;
  width: 24px;
  margin-left: -4px;
  height: 24px;
}
.notif b {
  position: absolute;
  left: 5px;
  top: 7px;
  width: 20px;
  height: 20px;
  border-radius: 50%;
  border: 1px solid #777;
  background: #2a2620;
  font-size: 11px;
  text-align: center;
  line-height: 18px;
  font-weight: 600;
  letter-spacing: 0;
}
```
